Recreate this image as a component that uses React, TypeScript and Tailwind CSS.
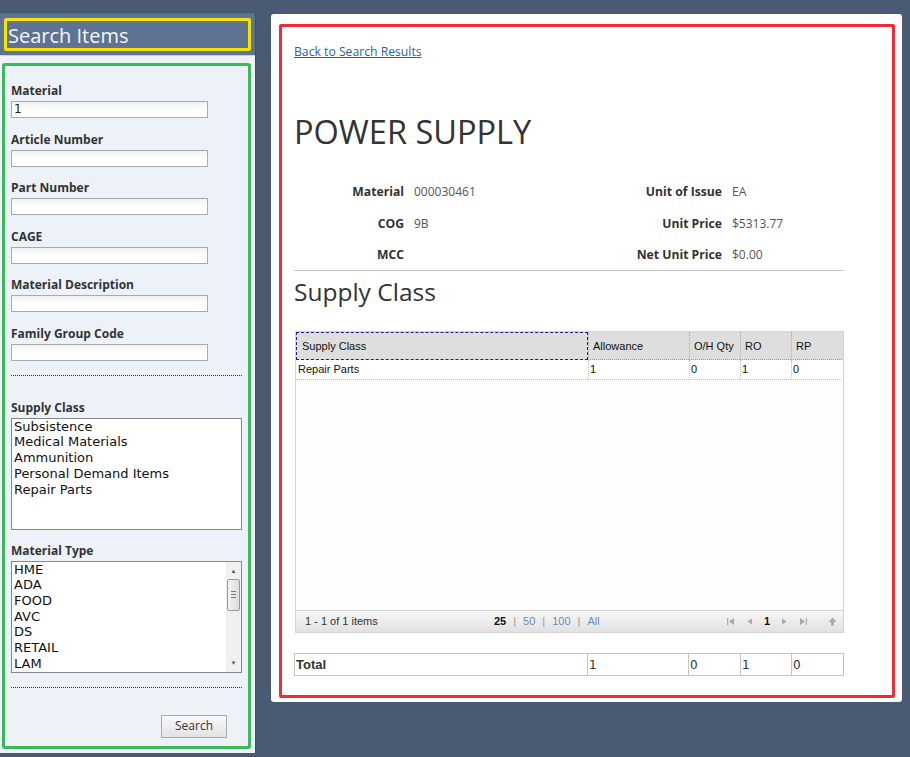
import React from "react";

const segoe = { fontFamily: '"Open Sans", "Noto Sans", sans-serif' };
const arial = { fontFamily: '"Liberation Sans", Arial, sans-serif' };
const verdana = { fontFamily: '"DejaVu Sans", Verdana, sans-serif' };

const fields = [
  { label: "Material", value: "1" },
  { label: "Article Number", value: "" },
  { label: "Part Number", value: "" },
  { label: "CAGE", value: "" },
  { label: "Material Description", value: "" },
  { label: "Family Group Code", value: "" },
];

const supplyClasses = [
  "Subsistence",
  "Medical Materials",
  "Ammunition",
  "Personal Demand Items",
  "Repair Parts",
];

const materialTypes = ["HME", "ADA", "FOOD", "AVC", "DS", "RETAIL", "LAM"];

const details = [
  ["Material", "000030461", "Unit of Issue", "EA"],
  ["COG", "9B", "Unit Price", "$5313.77"],
  ["MCC", "", "Net Unit Price", "$0.00"],
];

const cols = ["w-[292px]", "w-[101px]", "w-[51px]", "w-[51px]", "flex-1"];

const TextField = ({ label, value }: { label: string; value: string }) => (
  <div className="flex flex-col">
    <span className="text-[12px] font-bold leading-[16px] text-[#333]" style={segoe}>
      {label}
    </span>
    <div
      className="mt-[2px] h-[17px] w-[197px] border border-[#aaa] bg-gradient-to-b from-[#f0f0f0] via-white to-white px-[2px] text-[12px] leading-[15px] text-[#222]"
      style={verdana}
    >
      {value}
    </div>
  </div>
);

const PagerIcon = ({ d }: { d: string }) => (
  <svg width="9" height="9" viewBox="0 0 9 9" className="fill-[#aaa]">
    <path d={d} />
  </svg>
);

export default function App() {
  return (
    <div className="flex h-[757px] w-[910px] items-start overflow-hidden bg-[#4a5a72] pt-[13px]">
      {/* left search panel */}
      <aside className="flex h-[740px] w-[256px] flex-col border-r border-[#3f4d62] bg-[#edf1f8]">
        <div className="h-[42px] border-t border-[#56698a] bg-[#5f7392] px-[4px] pt-[4px]">
          <div className="flex h-[33px] w-[247px] items-center rounded-[2px] border-[3px] border-[#f2e400] pl-[1px] pt-[2px]">
            <span className="text-[20px] leading-none text-[#f4f6fa]" style={segoe}>
              Search Items
            </span>
          </div>
        </div>
        <div className="h-px bg-[#c9d1de]" />
        <div className="mx-[2px] mt-[7px] flex h-[686px] w-[249px] flex-col rounded-[3px] border-[3px] border-[#3cb95a] px-[6px] pt-[17px]">
          <div className="flex flex-col gap-[13.5px]">
            {fields.map((f) => (
              <TextField key={f.label} label={f.label} value={f.value} />
            ))}
          </div>
          <div className="mt-[14px] w-[231px] border-t border-dotted border-[#333]" />

          <span className="mt-[24px] text-[12px] font-bold leading-[16px] text-[#333]" style={segoe}>
            Supply Class
          </span>
          <div
            className="mt-[2px] h-[112px] w-[231px] border border-[#888] bg-white px-[2px] text-[13px] leading-[15.8px] text-[#111]"
            style={verdana}
          >
            {supplyClasses.map((s) => (
              <div key={s}>{s}</div>
            ))}
          </div>

          <span className="mt-[13px] text-[12px] font-bold leading-[16px] text-[#333]" style={segoe}>
            Material Type
          </span>
          <div className="mt-[2px] flex h-[112px] w-[231px] border border-[#888] bg-white">
            <div className="flex-1 overflow-hidden px-[2px] text-[13px] leading-[15.7px] text-[#111]" style={verdana}>
              {materialTypes.map((s) => (
                <div key={s}>{s}</div>
              ))}
            </div>
            <div className="flex w-[15px] flex-col items-center bg-[#f0f0f0] py-[3px]">
              <span className="text-[6px] leading-[12px] text-[#555]">▲</span>
              <div className="mt-[2px] flex h-[32px] w-[13px] flex-col items-center justify-center gap-[2px] rounded-[2px] border border-[#999] bg-gradient-to-r from-[#f4f4f4] to-[#dcdcdc]">
                <div className="h-px w-[5px] bg-[#777]" />
                <div className="h-px w-[5px] bg-[#777]" />
                <div className="h-px w-[5px] bg-[#777]" />
              </div>
              <div className="flex-1" />
              <span className="text-[6px] leading-[12px] text-[#555]">▼</span>
            </div>
          </div>
          <div className="mt-[14px] w-[231px] border-t border-dotted border-[#333]" />

          <div className="mt-[27px] flex w-[216px] justify-end">
            <button
              className="h-[23px] w-[66px] border border-[#aaa] bg-gradient-to-b from-[#fafafa] to-[#e2e2e2] text-[12px] text-[#333]"
              style={segoe}
            >
              Search
            </button>
          </div>
        </div>
      </aside>

      {/* right detail panel */}
      <main className="ml-[15px] mt-px h-[688px] w-[631px] rounded-[3px] bg-white pb-[4px] pl-[8px] pr-[7px] pt-[10px]">
        <div className="flex h-full flex-col rounded-[2px] border-[3px] border-[#ee2b36] pl-[12px] pt-[17px]">
          <a href="#" className="w-fit text-[12.2px] leading-[16px] text-[#2b5fae] underline" style={segoe}>
            Back to Search Results
          </a>
          <h1 className="mt-[52px] text-[32.5px] leading-[40px] text-[#333]" style={segoe}>
            POWER SUPPLY
          </h1>

          <div className="mt-[30px] grid w-[550px] grid-cols-[110px_160px_138px_1fr] gap-x-[10px] gap-y-[11.5px]">
            {details.map(([l1, v1, l2, v2]) => (
              <React.Fragment key={l1}>
                <span className="h-[20px] text-right text-[12.2px] font-bold leading-[20px] text-[#333]" style={segoe}>
                  {l1}
                </span>
                <span className="text-[12px] leading-[20px] text-[#555]" style={segoe}>
                  {v1}
                </span>
                <span className="text-right text-[12.2px] font-bold leading-[20px] text-[#333]" style={segoe}>
                  {l2}
                </span>
                <span className="text-[12px] leading-[20px] text-[#555]" style={segoe}>
                  {v2}
                </span>
              </React.Fragment>
            ))}
          </div>
          <div className="mt-[5px] h-px w-[550px] bg-[#c8c8c8]" />

          <h2 className="mt-[6px] text-[24.5px] leading-[30px] text-[#333]" style={segoe}>
            Supply Class
          </h2>

          {/* grid */}
          <div className="ml-px mt-[24px] flex h-[302px] w-[549px] flex-col border border-[#d4d4d4] bg-[#fefefe]" style={arial}>
            <div className="flex h-[28px] bg-[#dedede] pr-px text-[11px] text-[#111]">
              <div className={`${cols[0]} flex items-center border border-dashed border-[#1c1c8c] pl-[5px] pt-px`}>
                Supply Class
              </div>
              {["Allowance", "O/H Qty", "RO", "RP"].map((h, i) => (
                <div
                  key={h}
                  className={`${cols[i + 1]} flex items-center border-b border-l border-dotted border-b-[#999] border-l-[#b5ab98] pl-[4px] pt-px`}
                >
                  {h}
                </div>
              ))}
            </div>
            <div className="flex h-[20px] bg-white pr-px text-[11px] text-[#111]">
              {["Repair Parts", "1", "0", "1", "0"].map((c, i) => (
                <div
                  key={i}
                  className={`${cols[i]} flex items-center border-b border-dotted border-b-[#c8c0ac] ${
                    i > 0 ? "border-l border-l-[#c8c0ac] pl-px" : "pl-[2px]"
                  }`}
                >
                  {c}
                </div>
              ))}
            </div>
            <div className="flex-1" />
            <div className="flex h-[22px] items-center border-t border-[#d4d4d4] bg-gradient-to-b from-[#f7f7f7] to-[#e1e1e1] pl-[9px] pr-[6px] text-[11px] text-[#333]">
              <span className="w-[189px]">1 - 1 of 1 items</span>
              <span className="font-bold text-[#111]">25</span>
              <span className="mx-[7px] text-[#999]">|</span>
              <span className="text-[#6a8bbb]">50</span>
              <span className="mx-[7px] text-[#999]">|</span>
              <span className="text-[#6a8bbb]">100</span>
              <span className="mx-[7px] text-[#999]">|</span>
              <span className="text-[#6a8bbb]">All</span>
              <div className="flex-1" />
              <div className="flex items-center gap-[10px]">
                <PagerIcon d="M1 1h1.2v7H1zM8 1v7L3 4.5z" />
                <PagerIcon d="M7 1.5v6L2.5 4.5z" />
                <span className="text-[11px] font-bold text-[#111]">1</span>
                <PagerIcon d="M2 1.5v6L6.5 4.5z" />
                <PagerIcon d="M1 1v7l5-3.5zM6.8 1H8v7H6.8z" />
                <span className="ml-[10px]">
                  <PagerIcon d="M4.5 0.5L8.5 5H6v3.5H3V5H0.5z" />
                </span>
              </div>
            </div>
          </div>

          {/* totals */}
          <div className="mt-[20px] flex h-[23px] w-[550px] border border-[#c4c4c4] text-[12px] text-[#333]" style={segoe}>
            <div className="flex w-[292px] items-center pl-px text-[13px] font-bold" style={arial}>
              Total
            </div>
            {["1", "0", "1", "0"].map((v, i) => (
              <div
                key={i}
                className={`${["w-[101px]", "w-[52px]", "w-[51px]", "flex-1"][i]} flex items-center border-l border-[#c4c4c4] pl-px`}
                style={verdana}
              >
                {v}
              </div>
            ))}
          </div>
        </div>
      </main>
    </div>
  );
}
